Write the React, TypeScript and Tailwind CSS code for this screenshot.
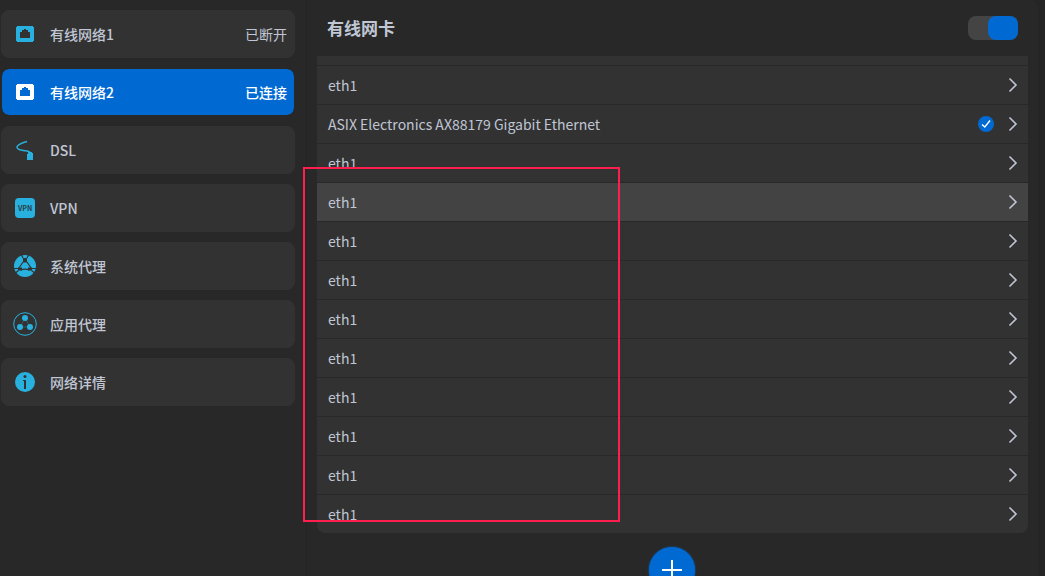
import type { ReactNode } from "react";
import clsx from "clsx";

function WiredIcon() {
  return (
    <svg width="24" height="24" viewBox="0 0 24 24" fill="currentColor" shapeRendering="crispEdges">
      <path
        fillRule="evenodd"
        d="M4 4h16v1h1v14h-1v1H4v-1H3V5h1zM11 7v1H9v2H7v6h10v-6h-2V8h-2V7z"
      />
    </svg>
  );
}

function DslIcon() {
  return (
    <svg width="24" height="24" viewBox="0 0 24 24" fill="none">
      <path
        d="M14 3.500C8 5 3.500 7.500 4 9.500C4.800 12.500 10 12.500 14 13C16.500 13.300 17.500 14 17.500 16"
        stroke="currentColor"
        strokeWidth="1.400"
      />
      <path d="M15 14h4v1h1v7h-6v-6h1z" fill="currentColor" />
    </svg>
  );
}

function VpnIcon() {
  return (
    <svg width="24" height="24" viewBox="0 0 24 24">
      <rect x="2" y="2" width="20" height="20" rx="4" fill="currentColor" />
      <text x="12" y="15" fontSize="7" fontWeight="700" textAnchor="middle" fill="#28404a">
        VPN
      </text>
    </svg>
  );
}

function SystemProxyIcon() {
  return (
    <svg width="24" height="24" viewBox="0 0 24 24">
      <circle cx="12" cy="12" r="11" fill="currentColor" />
      <g stroke="#323232" strokeWidth="1.200" fill="none">
        <path d="M8.500 1L10 4M15.500 1L14 4M10 8L6 14M14 8L18 14" />
        <path d="M1 14.500h5M18 14.500h5M5.500 16.500l-2.500 2M18.500 16.500l2.500 2" />
        <path d="M8 16C10 14.800 14 14.800 16 16" />
      </g>
      <path d="M10 4h4v4.500h-4zM5 13.500h4v3H5zM15 13.500h4v3h-4z" fill="#323232" />
    </svg>
  );
}

function AppProxyIcon() {
  return (
    <svg width="24" height="24" viewBox="0 0 24 24">
      <circle cx="12" cy="12" r="11.300" fill="none" stroke="currentColor" />
      <path d="M12 6L7 15h10z" fill="none" stroke="currentColor" strokeWidth="0.500" opacity="0.600" />
      <circle cx="12" cy="6" r="3" fill="currentColor" />
      <circle cx="7" cy="15" r="3" fill="currentColor" />
      <circle cx="17" cy="15" r="3" fill="currentColor" />
    </svg>
  );
}

function InfoIcon() {
  return (
    <svg width="24" height="24" viewBox="0 0 24 24">
      <circle cx="12" cy="12" r="10" fill="currentColor" />
      <circle cx="12" cy="6.500" r="1.500" fill="#323232" />
      <path d="M10 10h3v9h-2v-8h-1z" fill="#323232" />
    </svg>
  );
}

function ArrowIcon() {
  return (
    <svg width="10" height="16" viewBox="0 0 10 16" fill="none" stroke="currentColor" strokeWidth="1.600">
      <path d="M1.500 1.500L8 8L1.500 14.500" />
    </svg>
  );
}

type NavItem = { label: string; icon: ReactNode; status?: string; active?: boolean };

const navItems: NavItem[] = [
  { label: "有线网络1", icon: <WiredIcon />, status: "已断开" },
  { label: "有线网络2", icon: <WiredIcon />, status: "已连接", active: true },
  { label: "DSL", icon: <DslIcon /> },
  { label: "VPN", icon: <VpnIcon /> },
  { label: "系统代理", icon: <SystemProxyIcon /> },
  { label: "应用代理", icon: <AppProxyIcon /> },
  { label: "网络详情", icon: <InfoIcon /> },
];

const connections = [
  { name: "eth1" },
  { name: "ASIX Electronics AX88179 Gigabit Ethernet", connected: true },
  { name: "eth1" },
  { name: "eth1", hovered: true },
  { name: "eth1" },
  { name: "eth1" },
  { name: "eth1" },
  { name: "eth1" },
  { name: "eth1" },
  { name: "eth1" },
  { name: "eth1" },
  { name: "eth1" },
];

function Sidebar() {
  return (
    <nav className="flex w-[307px] shrink-0 flex-col gap-2.5 border-r border-[#232323] pt-2.5 pr-[11px] pl-px">
      {navItems.map((item) => (
        <button
          key={item.label}
          type="button"
          className={clsx(
            "flex h-12 shrink-0 items-center rounded-lg border pr-[7px] pl-[11px] text-left",
            item.active
              ? "border-[#282828] bg-[#0069d2] bg-clip-padding font-medium text-white"
              : "border-[#323232] bg-[#323232]",
          )}
        >
          <span className={item.active ? "text-white" : "text-[#28b1de]"}>{item.icon}</span>
          <span className="ml-[13px] flex-1 font-medium">{item.label}</span>
          {item.status && <span>{item.status}</span>}
        </button>
      ))}
    </nav>
  );
}

function ConnectionList() {
  return (
    <div className="relative">
      <div className="flex flex-col gap-px overflow-hidden rounded-b-lg">
        <div className="h-[9px] bg-[#323232]" />
        {connections.map((item, index) => (
          <button
            key={index}
            type="button"
            className={clsx(
              "flex h-[38px] items-center pr-2.5 pl-[11px] text-left",
              item.hovered ? "bg-[#434343]" : "bg-[#323232]",
            )}
          >
            <span className="flex-1">{item.name}</span>
            {item.connected && (
              <svg width="16" height="16" viewBox="0 0 16 16" className="mr-3.5">
                <circle cx="8" cy="8" r="8" fill="#0069d2" />
                <path d="M4 8.500L6.800 11L12 4.500" fill="none" stroke="#fff" strokeWidth="1.400" />
              </svg>
            )}
            <ArrowIcon />
          </button>
        ))}
      </div>
      {/* Marked area */}
      <div className="pointer-events-none absolute top-[111px] -left-3.5 h-[355px] w-[317px] border-2 border-[#ff1f4f]" />
    </div>
  );
}

export default function App() {
  return (
    <div className="flex h-screen overflow-hidden bg-[#252525] font-['Noto_Sans_CJK_SC',sans-serif] text-sm text-[#c0c6d4]">
      <div className="flex min-w-0 flex-1 rounded-tr-lg bg-[#282828]">
        <Sidebar />
        <main className="min-w-0 flex-1 px-2.5">
          <header className="flex h-14 items-center justify-between px-2.5">
            <h1 id="wired-title" className="text-[17px] font-bold">
              有线网卡
            </h1>
            <input
              type="checkbox"
              role="switch"
              defaultChecked
              aria-labelledby="wired-title"
              className="h-6 w-[50px] appearance-none rounded-lg bg-[#444444] before:block before:h-6 before:w-[30px] before:rounded-lg before:bg-[#0069d2] checked:before:ml-5"
            />
          </header>
          <ConnectionList />
          <div className="mt-3.5 flex justify-center pr-px">
            <button
              type="button"
              aria-label="添加"
              className="flex size-[46px] items-center justify-center rounded-full bg-[#0069d2] shadow-[0_0_2px_#0069d2]"
            >
              <svg width="20" height="20" viewBox="0 0 20 20" stroke="#fff" strokeWidth="2">
                <path d="M10 0v20M0 10h20" />
              </svg>
            </button>
          </div>
        </main>
      </div>
      <div className="w-[7px] shrink-0" />
    </div>
  );
}
